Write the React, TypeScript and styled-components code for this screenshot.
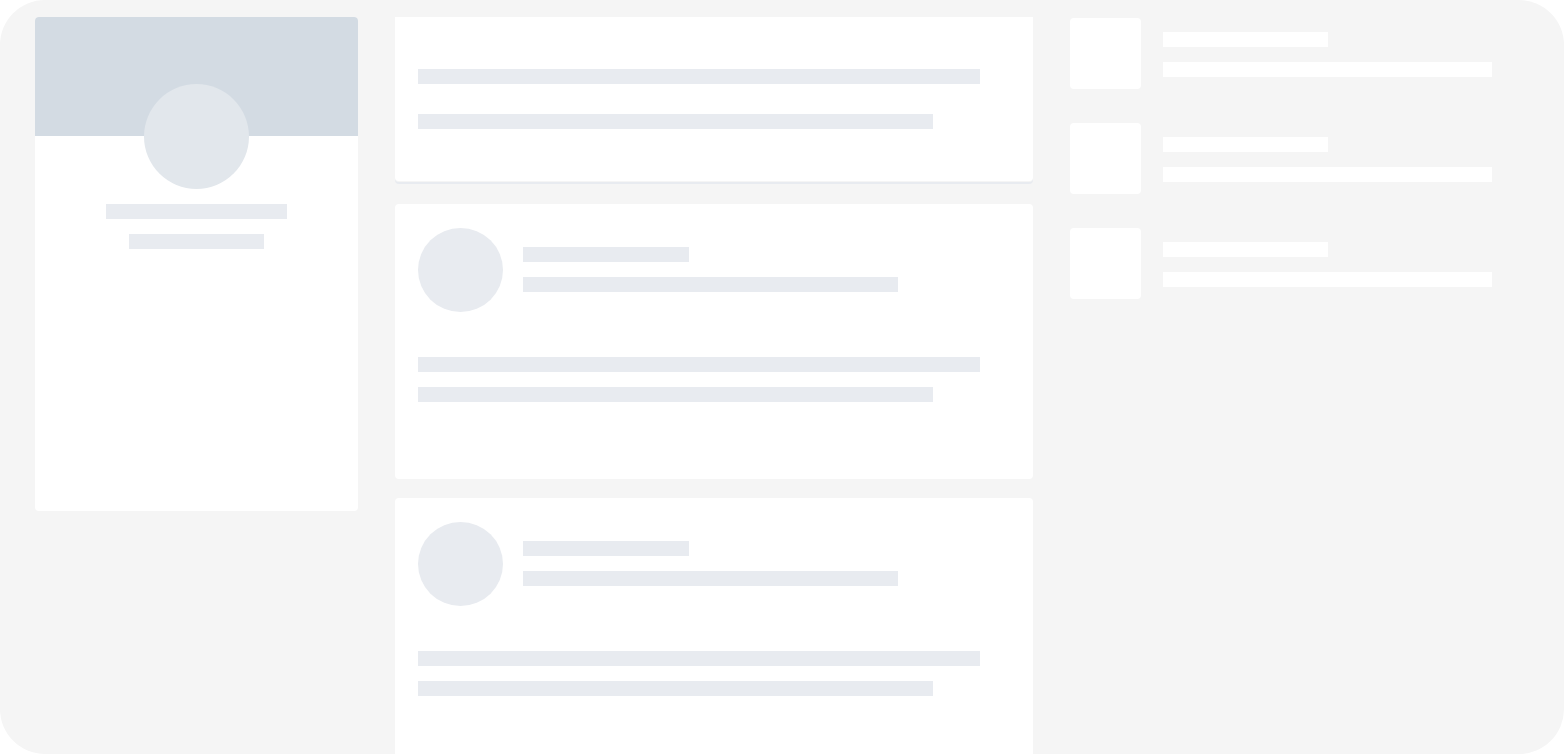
import React from "react";
import styled, { createGlobalStyle } from "styled-components";

const colors = {
  page: "#ffffff",
  canvas: "#f5f5f5",
  card: "#ffffff",
  banner: "#d3dbe3",
  avatar: "#e2e7ec",
  line: "#e8ebf0",
};

const GlobalStyle = createGlobalStyle`
  *, *::before, *::after { box-sizing: border-box; }
  body {
    margin: 0;
    background: ${colors.page};
    font-family: "Liberation Sans", sans-serif;
  }
`;

const Frame = styled.div`
  height: 100vh;
  overflow: hidden;
  border-radius: 45px;
  background: ${colors.canvas};
`;

const Layout = styled.div`
  display: grid;
  grid-template-columns: 323fr 638fr 459fr;
  align-items: start;
  column-gap: 37px;
  padding: 17px 35px 0;
`;

const Line = styled.div<{ $width: string; $color?: string }>`
  width: ${({ $width }) => $width};
  height: 15px;
  background: ${({ $color }) => $color ?? colors.line};
`;

const Lines = styled.div<{ $gap?: number; $inset?: number }>`
  flex: 1;
  display: flex;
  flex-direction: column;
  gap: ${({ $gap = 15 }) => $gap}px;
  padding-top: ${({ $inset = 0 }) => $inset}px;
`;

const ProfileCard = styled.aside`
  display: flex;
  flex-direction: column;
  align-items: center;
  min-height: 494px;
  border-radius: 4px;
  background: ${colors.card};
  overflow: hidden;
`;

const Banner = styled.div`
  width: 100%;
  height: 119px;
  background: ${colors.banner};
`;

const ProfileAvatar = styled.div`
  width: 105px;
  height: 105px;
  margin-top: -52px;
  border-radius: 50%;
  background: ${colors.avatar};
`;

const ProfileLines = styled.div`
  display: flex;
  flex-direction: column;
  align-items: center;
  gap: 15px;
  width: 100%;
  padding-top: 15px;
`;

const Feed = styled.main`
  display: flex;
  flex-direction: column;
  gap: 19px;
`;

const ContinuedPost = styled.article`
  margin-bottom: 4px;
  padding: 52px 23px;
  border-radius: 0 0 4px 4px;
  background: ${colors.card};
  box-shadow: 0 1px 0 ${colors.canvas}, 0 3px 0 ${colors.line};
`;

const PostCard = styled.article`
  display: flex;
  flex-direction: column;
  gap: 45px;
  padding: 24px 23px 77px;
  border-radius: 4px;
  background: ${colors.card};
`;

const PostHeader = styled.header`
  display: flex;
  gap: 20px;
`;

const PostAvatar = styled.div`
  flex: none;
  width: 85px;
  height: 84px;
  border-radius: 50%;
  background: ${colors.line};
`;

const Suggestions = styled.aside`
  display: flex;
  flex-direction: column;
  gap: 34px;
  padding-top: 1px;
`;

const Suggestion = styled.div`
  display: flex;
  gap: 22px;
`;

const Thumbnail = styled.div`
  flex: none;
  width: 71px;
  height: 71px;
  border-radius: 4px;
  background: ${colors.card};
`;

function Post() {
  return (
    <PostCard>
      <PostHeader>
        <PostAvatar />
        <Lines $inset={19}>
          <Line $width="34%" />
          <Line $width="77%" />
        </Lines>
      </PostHeader>
      <Lines>
        <Line $width="95%" />
        <Line $width="87%" />
      </Lines>
    </PostCard>
  );
}

export default function App() {
  return (
    <>
      <GlobalStyle />
      <Frame>
        <Layout>
          <ProfileCard>
            <Banner />
            <ProfileAvatar />
            <ProfileLines>
              <Line $width="56%" />
              <Line $width="42%" />
            </ProfileLines>
          </ProfileCard>

          <Feed>
            <ContinuedPost>
              <Lines $gap={30}>
                <Line $width="95%" />
                <Line $width="87%" />
              </Lines>
            </ContinuedPost>
            <Post />
            <Post />
          </Feed>

          <Suggestions>
            {[0, 1, 2].map((item) => (
              <Suggestion key={item}>
                <Thumbnail />
                <Lines $inset={14}>
                  <Line $width="45%" $color={colors.card} />
                  <Line $width="90%" $color={colors.card} />
                </Lines>
              </Suggestion>
            ))}
          </Suggestions>
        </Layout>
      </Frame>
    </>
  );
}
